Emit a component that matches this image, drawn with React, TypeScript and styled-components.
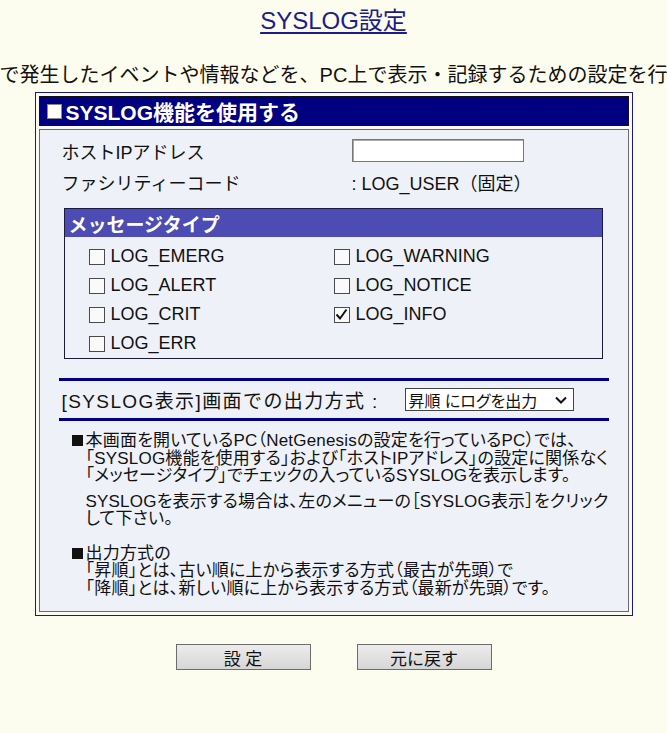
import React from "react";
import styled, { createGlobalStyle } from "styled-components";

const GlobalStyle = createGlobalStyle`
  html, body {
    margin: 0;
    padding: 0;
    overflow: hidden;
    background: #fdfdef;
    font-family: "Liberation Sans", "Noto Sans CJK JP", sans-serif;
    color: #111;
  }
`;

const Page = styled.div`
  width: 667px;
  display: flex;
  flex-direction: column;
  align-items: center;
`;

const Title = styled.h1`
  margin: 6px 0 0;
  font-size: 24px;
  line-height: 30px;
  font-weight: normal;
  color: #1c1c8a;
  text-decoration: underline;
  text-underline-offset: 3px;
`;

const Intro = styled.div`
  margin-top: 25px;
  width: 667px;
  display: flex;
  justify-content: center;
  font-size: 20px;
  line-height: 28px;
  white-space: nowrap;
`;

const Panel = styled.div`
  margin-top: 3px;
  width: 590px;
  border: 1px solid #1a1a80;
  padding: 3px;
  display: flex;
  flex-direction: column;
  gap: 3px;
  background: #fafaf2;
`;

const PanelHead = styled.div`
  height: 28px;
  background: #000080;
  border: 1px solid #111;
  display: flex;
  align-items: center;
  gap: 4px;
  padding-left: 7px;
  color: #fff;
  font-size: 21px;
  font-weight: bold;
`;

const HeadBox = styled.span`
  width: 13px;
  height: 13px;
  background: #fff;
  border: 1px solid #888;
`;

const PanelBody = styled.div`
  border: 1px solid #6a6a6a;
  background: #eef1f7;
  padding: 5px 18px 14px 22px;
`;

const FieldGrid = styled.div`
  display: grid;
  grid-template-columns: 290px 1fr;
  grid-auto-rows: 31px;
  align-items: center;
  font-size: 18px;
`;

const TextInput = styled.div`
  width: 170px;
  height: 21px;
  background: #fff;
  border: 1px solid #777;
  box-shadow: inset 1px 1px 0 #aaa;
`;

const MsgBox = styled.div`
  margin: 11px 0 0 2px;
  width: 537px;
  border: 1px solid #1a1a3a;
`;

const MsgHead = styled.div`
  height: 28px;
  background: #4c4cb4;
  color: #fff;
  font-size: 19px;
  font-weight: bold;
  display: flex;
  align-items: center;
  padding-left: 4px;
`;

const MsgList = styled.div`
  display: grid;
  grid-template-columns: 245px 1fr;
  grid-auto-rows: 29px;
  padding: 5px 0 0 24px;
  align-items: center;
`;

const Opt = styled.label`
  display: flex;
  align-items: center;
  gap: 6px;
  font-size: 18px;
`;

const Box = styled.span`
  width: 14px;
  height: 14px;
  border: 1px solid #4a4a4a;
  background: #fafafa;
  display: flex;
  align-items: center;
  justify-content: center;
`;

const Spacer = styled.div<{ $h: number }>`
  height: ${(p) => p.$h}px;
`;

const Rule = styled.div`
  margin-left: -3px;
  width: 550px;
  height: 3px;
  background: #000080;
`;

const OrderRow = styled.div`
  height: 37px;
  display: flex;
  align-items: center;
  font-size: 19px;
`;

const OrderLabel = styled.span`
  width: 343px;
  letter-spacing: 1.4px;
  white-space: nowrap;
`;

const FakeSelect = styled.div`
  width: 158px;
  height: 21px;
  border: 1px solid #444;
  background: #fff;
  display: flex;
  align-items: center;
  justify-content: space-between;
  padding: 0 6px 0 3px;
  font-size: 16px;
  font-feature-settings: "palt";
`;

const Notes = styled.div`
  margin-top: 11px;
  padding-left: 10px;
  font-size: 17px;
  letter-spacing: 0.2px;
  line-height: 17.5px;
  white-space: nowrap;
  font-feature-settings: "palt";
`;

const Note = styled.div<{ $gap?: number }>`
  display: flex;
  margin-top: ${(p) => p.$gap ?? 0}px;
`;

const Bullet = styled.span<{ $hide?: boolean }>`
  flex: none;
  width: 14px;
  display: flex;
  padding-top: 3px;
  &::before {
    content: "";
    width: 11px;
    height: 11px;
    background: #111;
    visibility: ${(p) => (p.$hide ? "hidden" : "visible")};
  }
`;

const Buttons = styled.div`
  margin-top: 28px;
  display: flex;
  gap: 46px;
`;

const Button = styled.button`
  width: 135px;
  height: 26px;
  border: 1px solid #6c6c6c;
  background: linear-gradient(#ececec, #d6d6d6);
  font-family: "Liberation Sans", "Noto Sans CJK JP", sans-serif;
  font-size: 17px;
  color: #111;
  padding: 0;
`;

function Check({ checked, label }: { checked?: boolean; label: string }) {
  return (
    <Opt>
      <Box>
        {checked && (
          <svg width="13" height="13" viewBox="0 0 13 13">
            <path d="M1.5 6.5 L5 10.5 L11.5 1.5" fill="none" stroke="#111" strokeWidth="2" />
          </svg>
        )}
      </Box>
      {label}
    </Opt>
  );
}

export default function App() {
  return (
    <>
      <GlobalStyle />
      <Page>
        <Title>SYSLOG設定</Title>
        <Intro>
          <span>で発生したイベントや情報などを、PC上で表示・記録するための設定を行</span>
        </Intro>
        <Panel>
          <PanelHead>
            <HeadBox />
            SYSLOG機能を使用する
          </PanelHead>
          <PanelBody>
            <FieldGrid>
              <span>ホストIPアドレス</span>
              <TextInput />
              <span>ファシリティーコード</span>
              <span>: LOG_USER（固定）</span>
            </FieldGrid>
            <MsgBox>
              <MsgHead>メッセージタイプ</MsgHead>
              <MsgList>
                <Check label="LOG_EMERG" />
                <Check label="LOG_WARNING" />
                <Check label="LOG_ALERT" />
                <Check label="LOG_NOTICE" />
                <Check label="LOG_CRIT" />
                <Check label="LOG_INFO" checked />
                <Check label="LOG_ERR" />
              </MsgList>
            </MsgBox>
            <Spacer $h={19} />
            <Rule />
            <OrderRow>
              <OrderLabel>[SYSLOG表示]画面での出力方式 :</OrderLabel>
              <FakeSelect>
                <span>昇順 にログを出力</span>
                <svg width="12" height="8" viewBox="0 0 12 8">
                  <path d="M1 1.5 L6 6.5 L11 1.5" fill="none" stroke="#111" strokeWidth="2" />
                </svg>
              </FakeSelect>
            </OrderRow>
            <Rule />
            <Notes>
              <Note>
                <Bullet />
                <div>
                  本画面を開いているPC（NetGenesisの設定を行っているPC）では、
                  <br />
                  「SYSLOG機能を使用する」および「ホストIPアドレス」の設定に関係なく
                  <br />
                  「メッセージタイプ」でチェックの入っているSYSLOGを表示します。
                </div>
              </Note>
              <Note $gap={8}>
                <Bullet $hide />
                <div>
                  SYSLOGを表示する場合は、左のメニューの［SYSLOG表示］をクリック
                  <br />
                  して下さい。
                </div>
              </Note>
              <Note $gap={17}>
                <Bullet />
                <div>
                  出力方式の
                  <br />
                  「昇順」とは、古い順に上から表示する方式（最古が先頭）で
                  <br />
                  「降順」とは、新しい順に上から表示する方式（最新が先頭）です。
                </div>
              </Note>
            </Notes>
          </PanelBody>
        </Panel>
        <Buttons>
          <Button>設 定</Button>
          <Button>元に戻す</Button>
        </Buttons>
      </Page>
    </>
  );
}
